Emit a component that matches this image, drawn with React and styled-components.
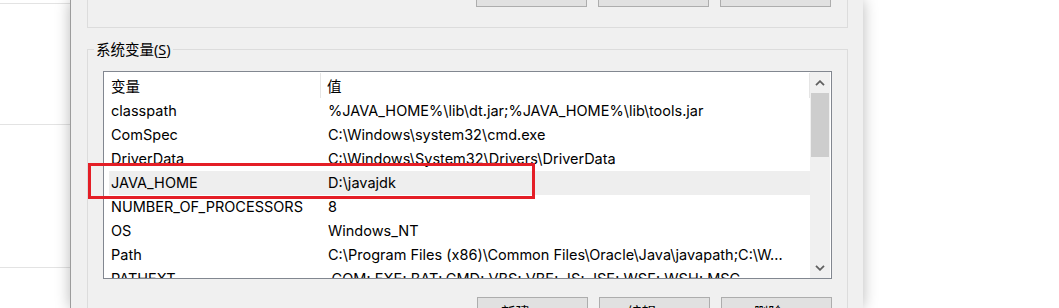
import React from "react";
import styled, { createGlobalStyle } from "styled-components";

const Global = createGlobalStyle`
  html, body { margin: 0; padding: 0; background: #ffffff; }
  body { height: 308px; overflow: hidden; }
  #root { height: 308px; }
`;

const FONT = `Inter, "Noto Sans CJK SC", sans-serif`;

const Screen = styled.div`
  display: flex;
  height: 308px;
  overflow: hidden;
  background: #ffffff;
  font-family: ${FONT};
  font-size: 14.5px;
  color: #000000;
`;

const BackPane = styled.div`
  width: 70px;
  flex: none;
  display: flex;
  flex-direction: column;
  background: #ffffff;
`;

const BackLine = styled.div`
  height: ${(p) => p.$h}px;
  border-bottom: 1px solid #e3e3e3;
  flex: none;
`;

const Dialog = styled.div`
  width: 761px;
  flex: none;
  display: flex;
  flex-direction: column;
  background: #f0f0f0;
  border-left: 1px solid #9c9c9c;
  box-shadow: 0 0 14px rgba(0, 0, 0, 0.28);
  padding: 0 15px 0 16px;
  box-sizing: content-box;
  position: relative;
  z-index: 1;
`;

const GroupBox = styled.div`
  position: relative;
  border: 1px solid #dcdcdc;
  padding: ${(p) => p.$pad};
  margin-top: ${(p) => p.$mt}px;
  display: flex;
  flex-direction: column;
`;

const Caption = styled.span`
  position: absolute;
  top: -11px;
  left: 6px;
  padding: 0 2px;
  background: #f0f0f0;
  line-height: 20px;
  font-family: "Noto Sans", "Noto Sans CJK SC", sans-serif;
  font-size: 14.5px;
  u { text-decoration: underline; text-underline-offset: 2px; }
`;

const ButtonRow = styled.div`
  display: flex;
  justify-content: flex-end;
  gap: 11px;
  margin-top: ${(p) => p.$mt || 0}px;
`;

const Button = styled.div`
  box-sizing: border-box;
  width: 111px;
  height: 24px;
  border: 1px solid #adadad;
  background: #e1e1e1;
  display: flex;
  align-items: flex-start;
  justify-content: center;
  font-family: "Noto Sans", "Noto Sans CJK SC", sans-serif;
  font-size: 14.5px;
  line-height: 20px;
  padding-top: 4px;
`;

const ListView = styled.div`
  height: 206px;
  border: 1px solid #828790;
  background: #ffffff;
  display: grid;
  grid-template-columns: 1fr 20px;
  padding-right: 1px;
  overflow: hidden;
`;

const ListBody = styled.div`
  display: flex;
  flex-direction: column;
  overflow: hidden;
`;

const Header = styled.div`
  height: 27px;
  flex: none;
  display: grid;
  grid-template-columns: 217px 1fr;
  font-family: "Noto Sans", "Noto Sans CJK SC", sans-serif;
`;

const HeaderCell = styled.div`
  padding-left: ${(p) => p.$pl}px;
  display: flex;
  align-items: center;
  border-right: 1px solid #e5e5e5;
  margin: 1px 0 1px;
  white-space: nowrap;
`;

const Row = styled.div`
  box-sizing: border-box;
  height: 24px;
  padding-bottom: 1px;
  flex: none;
  margin-left: 5px;
  display: grid;
  grid-template-columns: 219px 1fr;
  align-items: center;
  background: ${(p) => (p.$selected ? "#eeeeee" : "transparent")};
  white-space: nowrap;
`;

const Cell = styled.div`
  padding-left: ${(p) => p.$pl}px;
  overflow: hidden;
  line-height: 23px;
`;

const ScrollBar = styled.div`
  background: #f0f0f0;
  display: flex;
  flex-direction: column;
`;

const ArrowButton = styled.div`
  height: 21px;
  flex: none;
  display: flex;
  align-items: center;
  justify-content: center;
`;

const Track = styled.div`
  flex: 1;
  display: flex;
  flex-direction: column;
`;

const Thumb = styled.div`
  height: 64px;
  margin: 0 1px;
  background: #cdcdcd;
`;

const Highlight = styled.div`
  position: absolute;
  left: 0;
  top: 113px;
  width: 441px;
  height: 30px;
  border: 3px solid #e41e26;
  pointer-events: none;
`;

const Chevron = ({ up }) => (
  <svg width="10" height="6" viewBox="0 0 10 6">
    <polyline
      points={up ? "1,5.2 5,1.2 9,5.2" : "1,0.8 5,4.8 9,0.8"}
      fill="none"
      stroke="#606060"
      strokeWidth="1.8"
    />
  </svg>
);

const rows = [
  ["classpath", "%JAVA_HOME%\\lib\\dt.jar;%JAVA_HOME%\\lib\\tools.jar"],
  ["ComSpec", "C:\\Windows\\system32\\cmd.exe"],
  ["DriverData", "C:\\Windows\\System32\\Drivers\\DriverData"],
  ["JAVA_HOME", "D:\\javajdk", true],
  ["NUMBER_OF_PROCESSORS", "8"],
  ["OS", "Windows_NT"],
  ["Path", "C:\\Program Files (x86)\\Common Files\\Oracle\\Java\\javapath;C:\\W..."],
  ["PATHEXT", ".COM;.EXE;.BAT;.CMD;.VBS;.VBE;.JS;.JSE;.WSF;.WSH;.MSC"],
];

export default function App() {
  return (
    <>
      <Global />
      <Screen>
        <BackPane>
          <BackLine $h={3} />
          <BackLine $h={120} />
          <BackLine $h={142} />
        </BackPane>
        <Dialog>
          <GroupBox $mt={-40} $pad="22px 16px 20px 16px">
            <ButtonRow>
              <Button aria-label="新建(N)..." />
              <Button aria-label="编辑(E)..." />
              <Button aria-label="删除(D)" />
            </ButtonRow>
          </GroupBox>
          <GroupBox $mt={21} $pad="21px 15px 18px 15px">
            <Caption>
              系统变量(<u>S</u>)
            </Caption>
            <ListView>
              <ListBody>
                <Header>
                  <HeaderCell $pl={7}>变量</HeaderCell>
                  <HeaderCell $pl={6}>值</HeaderCell>
                </Header>
                {rows.map(([k, v, sel]) => (
                  <Row key={k} $selected={sel}>
                    <Cell $pl={2}>{k}</Cell>
                    <Cell $pl={0}>{v}</Cell>
                  </Row>
                ))}
              </ListBody>
              <ScrollBar>
                <ArrowButton>
                  <Chevron up />
                </ArrowButton>
                <Track>
                  <Thumb />
                </Track>
                <ArrowButton>
                  <Chevron />
                </ArrowButton>
              </ScrollBar>
            </ListView>
            <Highlight />
            <ButtonRow $mt={18}>
              <Button>新建(W)...</Button>
              <Button>编辑(I)...</Button>
              <Button>删除(L)</Button>
            </ButtonRow>
          </GroupBox>
        </Dialog>
      </Screen>
    </>
  );
}
